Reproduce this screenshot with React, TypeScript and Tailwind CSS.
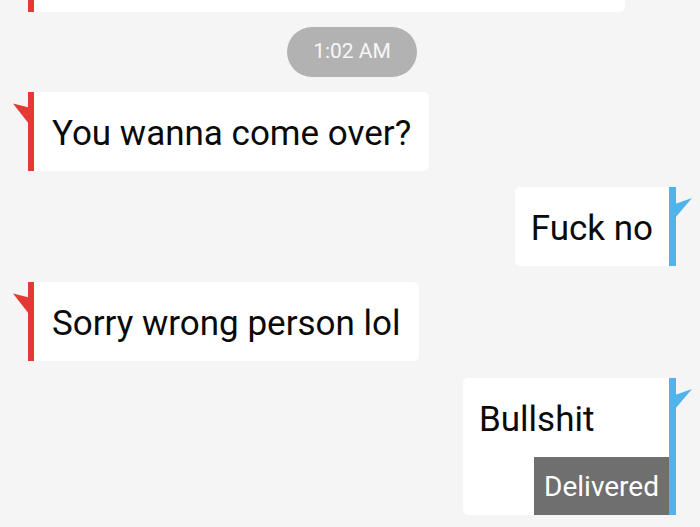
type Side = "in" | "out";

function Flag({ side }: { side: Side }) {
  if (side === "in") {
    return (
      <svg className="absolute left-[-15px] top-[10px]" width="16" height="24" viewBox="0 0 16 24">
        <polygon points="0,1.5 16,5.5 16,22" fill="#e53935" />
      </svg>
    );
  }
  return (
    <svg className="absolute right-[-16px] top-[10px]" width="17" height="24" viewBox="0 0 17 24">
      <polygon points="17,1 0,7 0,21" fill="#4fb4ec" />
    </svg>
  );
}

function Bubble({ side, text, delivered }: { side: Side; text: string; delivered?: boolean }) {
  if (side === "in") {
    return (
      <div className="relative ml-[28px] flex self-start">
        <Flag side="in" />
        <div className="w-[6px] bg-[#e53935]" />
        <div className="rounded-r-[5px] bg-white pl-[18px] pr-[18px] pt-[22px] pb-[17px] text-[35px] leading-[40px] text-[#0a0a0a]">
          {text}
        </div>
      </div>
    );
  }
  return (
    <div className="relative mr-[24px] flex self-end">
      <div className={`flex flex-col rounded-l-[5px] bg-white ${delivered ? "w-[206px]" : ""}`}>
        <div className="pl-[16px] pr-[16px] pt-[22px] pb-[17px] text-[35px] leading-[40px] text-[#0a0a0a]">
          {text}
        </div>
        {delivered && (
          <div className="ml-auto h-[58px] bg-[#6f6f6f] px-[10px] pt-[2px] text-[28px] leading-[56px] text-white">
            Delivered
          </div>
        )}
      </div>
      <div className="w-[7px] bg-[#4fb4ec]" />
      <Flag side="out" />
    </div>
  );
}

export default function App() {
  return (
    <div className="flex h-[527px] w-[700px] flex-col overflow-hidden bg-[#f5f5f5] font-['Roboto',sans-serif]">
      <div className="ml-[28px] flex h-[12px] w-[597px]">
        <div className="w-[6px] bg-[#e53935]" />
        <div className="flex-1 rounded-br-[5px] bg-white" />
      </div>

      <div className="mt-[15px] flex justify-center pl-[4px]">
        <div className="flex h-[50px] w-[130px] items-center justify-center rounded-full bg-[#b2b2b2] text-[21px] text-[#f7f7f7]">
          1:02 AM
        </div>
      </div>

      <div className="mt-[15px] flex flex-col gap-[16px]">
        <Bubble side="in" text="You wanna come over?" />
        <Bubble side="out" text="Fuck no" />
        <Bubble side="in" text="Sorry wrong person lol" />
        <div className="mt-[1px] flex flex-col">
          <Bubble side="out" text="Bullshit" delivered />
        </div>
      </div>
    </div>
  );
}
